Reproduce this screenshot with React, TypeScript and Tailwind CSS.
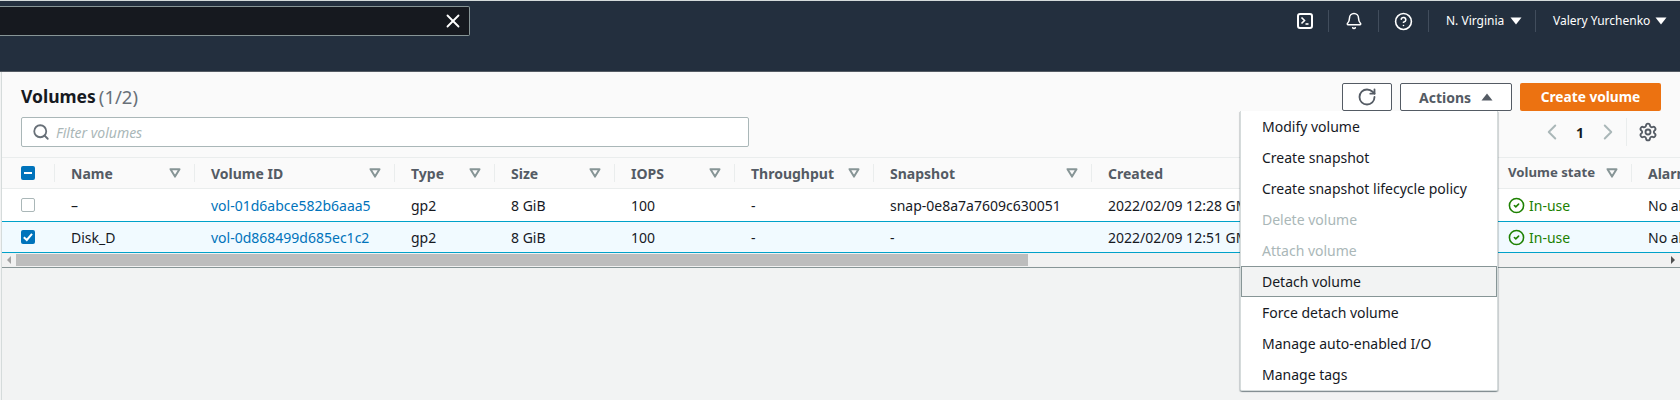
import React from "react";
import { Bell, ChevronLeft, ChevronRight, CircleCheck, CircleHelp, RotateCw, Search, Settings, X } from "lucide-react";

const Caret = ({ up = false, className = "" }: { up?: boolean; className?: string }) => (
  <svg width="12" height="8" viewBox="0 0 12 8" className={className}>
    <path d={up ? "M6 0.5 L11.5 7.5 H0.5 Z" : "M0.5 0.5 H11.5 L6 7.5 Z"} fill="currentColor" />
  </svg>
);

const FilterIcon = () => (
  <svg width="12" height="10" viewBox="0 0 12 10" className="shrink-0">
    <path d="M1.5 1.2 H10.5 L6 8.6 Z" fill="none" stroke="#879596" strokeWidth="2" strokeLinejoin="round" />
  </svg>
);

const TerminalIcon = () => (
  <svg width="16" height="16" viewBox="0 0 16 16" fill="none" stroke="#fff" strokeWidth="2">
    <rect x="1" y="1" width="14" height="14" rx="2" />
    <path d="M4.5 4.5 L7.5 7.5 L4.5 10.5" strokeWidth="1.6" />
    <path d="M8.5 11 H11.5" strokeWidth="1.6" />
  </svg>
);

const Divider = () => <div className="h-[22px] w-px bg-[#414d5c]" />;

const columns = [
  { title: "", w: "w-[53px]" },
  { title: "Name", w: "w-[140px]" },
  { title: "Volume ID", w: "w-[200px]" },
  { title: "Type", w: "w-[100px]" },
  { title: "Size", w: "w-[120px]" },
  { title: "IOPS", w: "w-[120px]" },
  { title: "Throughput", w: "w-[139px]" },
  { title: "Snapshot", w: "w-[218px]" },
  { title: "Created", w: "w-[400px]" },
  { title: "Volume state", w: "w-[140px]" },
  { title: "Alarm status", w: "w-[140px]" },
];

const rows = [
  { selected: false, name: "–", id: "vol-01d6abce582b6aaa5", snap: "snap-0e8a7a7609c630051", created: "2022/02/09 12:28 GMT+1" },
  { selected: true, name: "Disk_D", id: "vol-0d868499d685ec1c2", snap: "-", created: "2022/02/09 12:51 GMT+1" },
];

const menu = [
  { label: "Modify volume" },
  { label: "Create snapshot" },
  { label: "Create snapshot lifecycle policy" },
  { label: "Delete volume", disabled: true },
  { label: "Attach volume", disabled: true },
  { label: "Detach volume", active: true },
  { label: "Force detach volume" },
  { label: "Manage auto-enabled I/O" },
  { label: "Manage tags" },
];

function Checkbox({ state }: { state: "off" | "on" | "mixed" }) {
  if (state === "off") return <div className="h-[14px] w-[14px] rounded-[2px] border border-[#aab7b8] bg-white" />;
  return (
    <div className="flex h-[14px] w-[14px] items-center justify-center rounded-[2px] bg-[#0073bb]">
      <svg width="14" height="14" viewBox="0 0 14 14" fill="none" stroke="#fff" strokeWidth="2">
        {state === "on" ? <path d="M2.8 7.2 L5.8 10 L11 3.8" /> : <path d="M3 7 H11" />}
      </svg>
    </div>
  );
}

export default function App() {
  return (
    <div className="flex h-[400px] w-[1680px] flex-col overflow-hidden whitespace-nowrap bg-[#f2f3f3] font-['Noto_Sans',sans-serif] text-[14px] text-[#16191f]">
      <header className="flex h-[72px] shrink-0 items-start justify-between border-t border-b border-t-[#d5dbdb] border-b-[#545b64] bg-[#232f3e] pt-[5px]">
        <div className="flex h-[30px] w-[470px] items-center justify-end rounded-r-[2px] border border-l-0 border-[#879596] bg-[#16191f] pr-[5px]">
          <X size={22} color="#fff" strokeWidth={2} />
        </div>
        <div className="flex h-[30px] items-center text-[12px] text-white">
          <div className="flex w-[47px] justify-center pl-[1px]"><TerminalIcon /></div>
          <Divider />
          <div className="flex w-[49px] justify-center"><Bell size={18} color="#fff" strokeWidth={2} /></div>
          <Divider />
          <div className="flex w-[49px] justify-center"><CircleHelp size={19} color="#fff" strokeWidth={2} /></div>
          <Divider />
          <div className="flex w-[106px] items-center gap-[6px] pl-[17px]"><span>N. Virginia</span><Caret /></div>
          <Divider />
          <div className="flex w-[144px] items-center gap-[5px] pl-[17px]"><span>Valery Yurchenko</span><Caret /></div>
        </div>
      </header>

      <main className="relative ml-[1px] flex min-h-0 flex-1 flex-col border-l border-[#d5dbdb]">
        <section className="flex h-[85px] shrink-0 justify-between bg-[#fafafa] pl-[19px] pr-[19px] pt-[11px]">
          <div className="flex w-[728px] flex-col">
            <h1 className="flex h-[28px] items-center text-[17.5px] font-bold leading-none">
              Volumes<span className="ml-[3px] text-[18.5px] font-normal text-[#687078]">(1/2)</span>
            </h1>
            <div className="mt-[6px] flex h-[30px] items-center gap-[6px] rounded-[2px] border border-[#aab7b8] bg-white pl-[10px]">
              <Search size={18} color="#687078" strokeWidth={2.4} />
              <span className="italic text-[#aab7b8]">Filter volumes</span>
            </div>
          </div>
          <div className="flex flex-col items-end">
            <div className="flex h-[28px] gap-[8px] font-bold">
              <button className="flex w-[50px] items-center justify-center rounded-[2px] border border-[#545b64] bg-white">
                <RotateCw size={20} color="#545b64" strokeWidth={2.2} />
              </button>
              <button className="flex w-[112px] items-center justify-center gap-[10px] rounded-[2px] border border-[#545b64] bg-white text-[#545b64]">
                Actions<Caret up />
              </button>
              <button className="w-[141px] rounded-[2px] bg-[#ec7211] text-[13.7px] text-white">Create volume</button>
            </div>
            <div className="mt-[6px] flex h-[30px] items-center pr-[3px]">
              <ChevronLeft size={26} color="#aab7b8" strokeWidth={1.8} />
              <span className="w-[30px] text-center font-bold">1</span>
              <ChevronRight size={26} color="#aab7b8" strokeWidth={1.8} />
              <div className="ml-[5px] h-[28px] w-px bg-[#eaeded]" />
              <div className="ml-[11px]"><Settings size={20} color="#545b64" strokeWidth={2.2} /></div>
            </div>
          </div>
        </section>

        <section className="w-full shrink-0 overflow-hidden">
          <div className="flex h-[32px] w-max items-center border-y border-[#eaeded] bg-[#fafafa] font-bold text-[#545b64]">
            {columns.map((c, i) =>
              i === 0 ? (
                <div key={i} className={`flex h-[18px] items-center border-r border-[#eaeded] pl-[19px] ${c.w}`}>
                  <Checkbox state="mixed" />
                </div>
              ) : (
                <div key={i} className={`flex h-[18px] shrink-0 items-center justify-between border-r border-[#eaeded] pl-[16px] pr-[13px] ${c.w}`}>
                  <span className={i === 9 ? "text-[13.2px]" : ""}>{c.title}</span>
                  {i !== 8 && i !== 10 && <FilterIcon />}
                </div>
              ),
            )}
          </div>
          {rows.map((r) => (
            <div key={r.id} className={`flex h-[32px] w-max items-center ${r.selected ? "border-y border-[#00a1c9] bg-[#f1faff]" : "bg-white"}`}>
              <div className="flex w-[53px] shrink-0 pl-[19px]"><Checkbox state={r.selected ? "on" : "off"} /></div>
              <div className="w-[140px] shrink-0 pl-[16px]">{r.name}</div>
              <div className="w-[200px] shrink-0 pl-[16px] text-[#0073bb]">{r.id}</div>
              <div className="w-[100px] shrink-0 pl-[16px]">gp2</div>
              <div className="w-[120px] shrink-0 pl-[16px]">8 GiB</div>
              <div className="w-[120px] shrink-0 pl-[16px]">100</div>
              <div className="w-[139px] shrink-0 pl-[16px]">-</div>
              <div className="w-[218px] shrink-0 pl-[16px]">{r.snap}</div>
              <div className="w-[400px] shrink-0 pl-[16px]">{r.created}</div>
              <div className="flex w-[140px] shrink-0 items-center gap-[4px] pl-[16px] text-[#1d8102]">
                <CircleCheck size={17} strokeWidth={2.2} />In-use
              </div>
              <div className="w-[140px] shrink-0 pl-[16px]">No alarms</div>
            </div>
          ))}
          <div className="flex h-[15px] items-center border-b border-[#879596] bg-[#f1f1f1]">
            <div className="flex w-[14px] justify-center"><div className="h-0 w-0 border-y-[4px] border-r-[4px] border-y-transparent border-r-[#a3a3a3]" /></div>
            <div className="h-[12px] w-[1012px] bg-[#bdbdbd]" />
            <div className="ml-auto flex w-[14px] justify-center"><div className="h-0 w-0 border-y-[4px] border-l-[4px] border-y-transparent border-l-[#505050]" /></div>
          </div>
        </section>

        <div className="absolute left-[1238px] top-[39px] w-[258px] rounded-b-[2px] border border-t-0 border-[#d5dbdb] bg-white shadow-[0_1px_1px_rgba(0,28,36,0.3),1px_1px_1px_rgba(0,28,36,0.15),-1px_1px_1px_rgba(0,28,36,0.15)]">
          {menu.map((m) => (
            <div
              key={m.label}
              className={`flex h-[31px] items-center ${m.disabled ? "text-[#aab7b8]" : ""} ${m.active ? "border border-[#879596] bg-[#f2f3f3] pl-[20px]" : "pl-[21px]"}`}
            >
              {m.label}
            </div>
          ))}
        </div>
      </main>
    </div>
  );
}
